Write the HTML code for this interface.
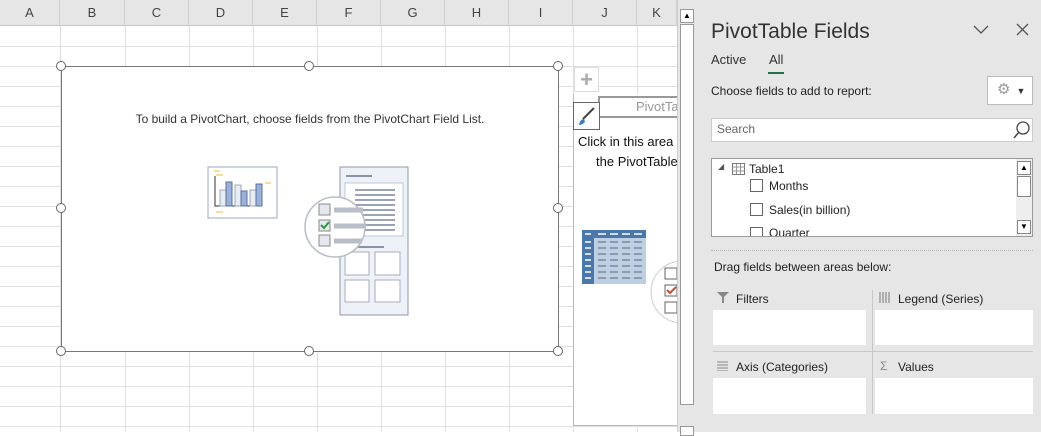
<!DOCTYPE html><html><head><style>
*{margin:0;padding:0;box-sizing:border-box}
body{width:1041px;height:432px;overflow:hidden;background:#fff;font-family:"Liberation Sans",sans-serif;position:relative}
.a{position:absolute}
.ch{top:0;height:26px;background:#e6e6e6;border-bottom:1px solid #c6c6c6;font-size:13px;color:#444;text-align:center;line-height:26px;border-right:1px solid #cfcfcf}
.vl{width:1px;background:#e0e0e0;top:26px;height:406px}
.hl{height:1px;background:#e0e0e0;left:0;width:677px}
.h{width:10px;height:10px;border:1.5px solid #666;border-radius:50%;background:#fff}
.t{font-size:12px;color:#222}
.box{background:#fff}
</style></head><body>
<div class="a ch" style="left:0;width:60px">A</div>
<div class="a ch" style="left:60px;width:65px">B</div>
<div class="a ch" style="left:125px;width:64px">C</div>
<div class="a ch" style="left:189px;width:64px">D</div>
<div class="a ch" style="left:253px;width:64px">E</div>
<div class="a ch" style="left:317px;width:64px">F</div>
<div class="a ch" style="left:381px;width:64px">G</div>
<div class="a ch" style="left:445px;width:64px">H</div>
<div class="a ch" style="left:509px;width:64px">I</div>
<div class="a ch" style="left:573px;width:64px">J</div>
<div class="a ch" style="left:637px;width:40px">K</div>
<div class="a vl" style="left:60px"></div><div class="a vl" style="left:125px"></div><div class="a vl" style="left:189px"></div><div class="a vl" style="left:253px"></div><div class="a vl" style="left:317px"></div><div class="a vl" style="left:381px"></div><div class="a vl" style="left:445px"></div><div class="a vl" style="left:509px"></div><div class="a vl" style="left:573px"></div><div class="a vl" style="left:637px"></div>
<div class="a hl" style="top:46px"></div><div class="a hl" style="top:66px"></div><div class="a hl" style="top:86px"></div><div class="a hl" style="top:106px"></div><div class="a hl" style="top:126px"></div><div class="a hl" style="top:146px"></div><div class="a hl" style="top:166px"></div><div class="a hl" style="top:186px"></div><div class="a hl" style="top:206px"></div><div class="a hl" style="top:226px"></div><div class="a hl" style="top:246px"></div><div class="a hl" style="top:266px"></div><div class="a hl" style="top:286px"></div><div class="a hl" style="top:306px"></div><div class="a hl" style="top:326px"></div><div class="a hl" style="top:346px"></div><div class="a hl" style="top:366px"></div><div class="a hl" style="top:386px"></div><div class="a hl" style="top:406px"></div><div class="a hl" style="top:426px"></div>
<!-- pivot table area J -->
<div class="a box" style="left:573px;top:94px;width:104px;height:332px;border-left:1px solid #bbb;border-bottom:1px solid #bbb"></div>
<div class="a box" style="left:574px;top:67px;width:25px;height:25px;border:1px solid #ddd;color:#aaa;font-size:22px;text-align:center;line-height:24px;font-weight:bold">+</div>
<div class="a" style="left:598px;top:96px;width:79px;height:22px;border:2px solid #999;border-right:none;color:#999;font-size:13px;line-height:18px;padding-left:36px;overflow:hidden;white-space:nowrap;background:#fff">PivotTable</div>
<div class="a box" style="left:573px;top:102px;width:27px;height:28px;border:1px solid #666"><svg width="26" height="26"><path d="M20 5 L9 16" stroke="#444" stroke-width="2"/><path d="M5 22 Q6 16 10 16 L11 19 Q8 22 5 22Z" fill="#3a7bc8"/></svg></div>
<div class="a" style="left:578px;top:132px;width:99px;font-size:13px;color:#111;white-space:nowrap;overflow:hidden;line-height:20px">Click in this area<br>&nbsp;&nbsp;&nbsp;&nbsp;&nbsp;the PivotTable</div>
<svg class="a" style="left:582px;top:230px" width="64" height="54"><rect width="64" height="54" fill="#bfcfe3"/><rect width="12" height="54" fill="#4a78ab"/><rect width="64" height="8" fill="#4a78ab"/>
<g stroke="#fff" stroke-width="1.5"><path d="M3 4h6M16 4h8M28 4h8M40 4h8M52 4h8M3 12h6M3 18h6M3 24h6M3 30h6M3 36h6M3 42h6M3 48h6"/></g>
<g stroke="#7a8a9c" stroke-width="1.5"><path d="M16 12h8M28 12h8M40 12h8M52 12h8M16 18h8M28 18h8M40 18h8M52 18h8M16 24h8M28 24h8M40 24h8M52 24h8M16 30h8M28 30h8M40 30h8M52 30h8M16 36h8M28 36h8M40 36h8M52 36h8M16 42h8M28 42h8M40 42h8M52 42h8M16 48h8M28 48h8M40 48h8M52 48h8"/></g></svg>
<svg class="a" style="left:650px;top:260px" width="27" height="64"><circle cx="32" cy="32" r="31" fill="#fff" stroke="#ccc"/><rect x="15" y="8" width="12" height="11" fill="#fff" stroke="#666"/><rect x="15" y="25" width="12" height="11" fill="#fff" stroke="#666"/><path d="M17 30l3 3 6-6" stroke="#d04a2a" stroke-width="2" fill="none"/><rect x="15" y="42" width="12" height="11" fill="#fff" stroke="#666"/></svg>
<!-- chart -->
<div class="a box" style="left:61px;top:66px;width:498px;height:286px;border:1.5px solid #777"></div>
<div class="a h" style="left:56px;top:61px"></div><div class="a h" style="left:304px;top:61px"></div><div class="a h" style="left:553px;top:61px"></div>
<div class="a h" style="left:56px;top:203px"></div><div class="a h" style="left:553px;top:203px"></div>
<div class="a h" style="left:56px;top:346px"></div><div class="a h" style="left:304px;top:346px"></div><div class="a h" style="left:553px;top:346px"></div>
<div class="a" style="left:61px;top:112px;width:498px;text-align:center;font-size:12px;color:#333">To build a PivotChart, choose fields from the PivotChart Field List.</div>
<svg class="a" style="left:207px;top:166px" width="72" height="54"><rect x="1" y="1" width="69" height="51" fill="#fff" stroke="#9aa8bf"/>
<path d="M7 5h6M9 9h7M58 17h6M9 46h7" stroke="#f5b942" stroke-width="1"/><path d="M8 10v30h44" stroke="#333" fill="none"/>
<rect x="13" y="24" width="6" height="16" fill="#e8edf5" stroke="#9aa8bf"/><rect x="19" y="16" width="6" height="24" fill="#9ab0d6" stroke="#5a70a0"/><rect x="28" y="19" width="6" height="21" fill="#e8edf5" stroke="#9aa8bf"/><rect x="34" y="25" width="6" height="15" fill="#9ab0d6" stroke="#5a70a0"/><rect x="43" y="24" width="6" height="16" fill="#e8edf5" stroke="#9aa8bf"/><rect x="49" y="18" width="6" height="22" fill="#9ab0d6" stroke="#5a70a0"/></svg>
<svg class="a" style="left:300px;top:164px" width="112" height="154"><rect x="40" y="3" width="68" height="148" fill="#eef2f8" stroke="#8c96a6"/>
<path d="M46 12h26M58 83h26" stroke="#8a94a4" stroke-width="2"/><rect x="45" y="19" width="58" height="53" fill="#fff" stroke="#bfc7d3"/>
<g stroke="#7a8698" stroke-width="1.6"><path d="M55 26h40M55 31h40M55 36h40M55 41h40M55 46h40M55 51h40M55 56h40M55 61h40M55 66h40"/></g>
<rect x="45" y="88" width="24" height="23" fill="#fff" stroke="#aab"/><rect x="75" y="88" width="25" height="23" fill="#fff" stroke="#aab"/><rect x="45" y="116" width="24" height="22" fill="#fff" stroke="#aab"/><rect x="75" y="116" width="25" height="22" fill="#fff" stroke="#aab"/>
<circle cx="35" cy="63" r="30" fill="#fff" stroke="#b8bec8" stroke-width="1.5"/>
<rect x="19" y="40" width="11" height="11" fill="#e4e8ee" stroke="#888"/><rect x="19" y="56" width="11" height="11" fill="#e4e8ee" stroke="#888"/><rect x="19" y="71" width="11" height="11" fill="#e4e8ee" stroke="#888"/>
<path d="M21 61l3 3 5-6" stroke="#2a9a3a" stroke-width="2" fill="none"/>
<path d="M34 46h29M34 62h32M34 77h28" stroke="#b8bec8" stroke-width="5"/></svg>
<!-- scrollbar -->
<div class="a" style="left:677px;top:0;width:21px;height:432px;background:#e6e6e6;border-left:1px solid #ccc"></div>
<div class="a" style="left:680px;top:9px;width:14px;height:14px;background:#fff;border:1px solid #999;font-size:8px;text-align:center;line-height:12px">▲</div>
<div class="a" style="left:680px;top:24px;width:14px;height:381px;background:#fff;border:1px solid #999"></div>
<div class="a" style="left:680px;top:426px;width:14px;height:10px;background:#fff;border:1px solid #999"></div>
<!-- pane -->
<div class="a" style="left:698px;top:0;width:343px;height:432px;background:#e6e6e6"></div>
<div class="a" style="left:711px;top:20px;font-size:21px;color:#333">PivotTable Fields</div>
<svg class="a" style="left:973px;top:22px" width="60" height="16"><path d="M1 4l7 7 7-7" stroke="#555" fill="none" stroke-width="1.3"/><path d="M44 2l11 11M55 2L44 13" stroke="#555" stroke-width="1.3"/></svg>
<div class="a t" style="left:711px;top:52px;font-size:13px;color:#333">Active</div>
<div class="a t" style="left:769px;top:52px;font-size:13px;color:#333">All</div>
<div class="a" style="left:768px;top:72px;width:16px;height:2px;background:#217346"></div>
<div class="a t" style="left:711px;top:84px">Choose fields to add to report:</div>
<div class="a box" style="left:987px;top:76px;width:46px;height:29px;border:1px solid #bbb;color:#999;font-size:15px;line-height:26px;padding-left:9px">⚙<span style="font-size:9px;color:#333;margin-left:6px">▼</span></div>
<div class="a box" style="left:711px;top:118px;width:322px;height:24px;border:1px solid #ccc;font-size:12px;color:#666;line-height:21px;padding-left:5px">Search</div>
<svg class="a" style="left:1012px;top:120px" width="20" height="20"><circle cx="11" cy="8" r="6" stroke="#444" fill="none" stroke-width="1.3"/><path d="M7 12L2 18" stroke="#444" stroke-width="1.5"/></svg>
<div class="a box" style="left:711px;top:158px;width:322px;height:79px;border:1px solid #999;overflow:hidden">
<div class="a t" style="left:6px;top:3px;font-size:8px;color:#555">◢</div>
<svg class="a" style="left:20px;top:4px" width="13" height="12"><rect x=".5" y=".5" width="12" height="11" fill="#fff" stroke="#777"/><path d="M.5 4h12M.5 8h12M4.5 .5v11M8.5 .5v11" stroke="#999"/></svg>
<div class="a t" style="left:37px;top:3px">Table1</div>
<div class="a" style="left:38px;top:20px;width:13px;height:13px;border:1px solid #666"></div><div class="a t" style="left:57px;top:20px">Months</div>
<div class="a" style="left:38px;top:44px;width:13px;height:13px;border:1px solid #666"></div><div class="a t" style="left:57px;top:44px">Sales(in billion)</div>
<div class="a" style="left:38px;top:68px;width:13px;height:13px;border:1px solid #666"></div><div class="a t" style="left:57px;top:67px">Quarter</div>
<div class="a" style="left:304px;top:0;width:17px;height:78px;background:#eee"></div>
<div class="a box" style="left:305px;top:2px;width:14px;height:14px;border:1px solid #888;font-size:8px;text-align:center;line-height:12px">▲</div>
<div class="a box" style="left:305px;top:17px;width:14px;height:21px;border:1px solid #888"></div>
<div class="a box" style="left:305px;top:61px;width:14px;height:14px;border:1px solid #888;font-size:8px;text-align:center;line-height:12px">▼</div>
</div>
<div class="a" style="left:711px;top:250px;width:322px;border-top:1px dotted #bbb"></div>
<div class="a t" style="left:714px;top:260px">Drag fields between areas below:</div>
<svg class="a" style="left:717px;top:292px" width="12" height="11"><path d="M0 0h12L7 5v6H5V5z" fill="#888"/></svg>
<div class="a t" style="left:736px;top:292px">Filters</div>
<svg class="a" style="left:879px;top:292px" width="12" height="11"><path d="M1 0v11M4 0v11M7 0v11M10 0v11" stroke="#888" stroke-width="1.2"/></svg>
<div class="a t" style="left:898px;top:292px">Legend (Series)</div>
<div class="a box" style="left:713px;top:310px;width:153px;height:35px"></div>
<div class="a box" style="left:875px;top:310px;width:158px;height:35px"></div>
<div class="a" style="left:872px;top:290px;width:1px;height:124px;background:#c8c8c8"></div>
<div class="a" style="left:713px;top:351px;width:320px;height:1px;background:#c8c8c8"></div>
<svg class="a" style="left:717px;top:361px" width="12" height="10"><path d="M0 1h11M0 4h11M0 7h11M0 10h11" stroke="#888"/></svg>
<div class="a t" style="left:736px;top:360px">Axis (Categories)</div>
<div class="a t" style="left:880px;top:359px;color:#888">Σ</div>
<div class="a t" style="left:898px;top:360px">Values</div>
<div class="a box" style="left:713px;top:378px;width:153px;height:36px"></div>
<div class="a box" style="left:875px;top:378px;width:158px;height:36px"></div>
</body></html>
